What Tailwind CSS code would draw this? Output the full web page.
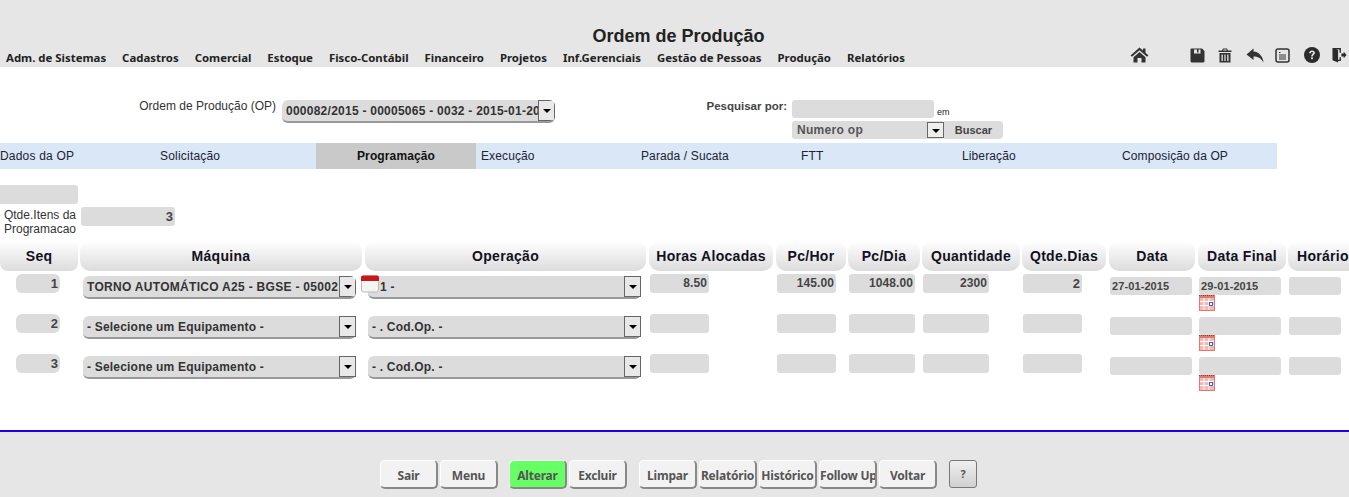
<!DOCTYPE html>
<html lang="pt-BR">
<head>
    <meta charset="UTF-8">
    <title>Ordem de Produção</title>
    <script src="https://cdn.jsdelivr.net/npm/@tailwindcss/browser@4"></script>
</head>
<body class="bg-white h-[497px] overflow-hidden font-['Liberation_Sans',Arial,sans-serif] text-[#333]">
    <!-- Cabecalho -->
    <header class="h-[67px] bg-[#e6e6e6] relative">
        <h1 class="pt-[26px] text-center text-[18px] leading-[21px] font-bold text-[#222] pl-[8px]">Ordem de Produção</h1>
        <div class="flex justify-between pl-[6px] mt-[2px]">
            <nav class="flex gap-[16px] pt-[1px] text-[11.4px] leading-[15px] font-bold text-[#222] font-['Noto_Sans',sans-serif]">
                <span>Adm. de Sistemas</span><span>Cadastros</span><span>Comercial</span><span>Estoque</span><span>Fisco-Contábil</span><span>Financeiro</span><span>Projetos</span><span>Inf.Gerenciais</span><span>Gestão de Pessoas</span><span>Produção</span><span>Relatórios</span>
            </nav>
            <div class="flex items-center h-[18px] -mt-[3px] mr-[2px] text-[#333]">
                <svg class="w-[19px] h-[16px] mr-[41px]" viewBox="0 0 19 16" fill="#333"><path d="M9.5 0.5 0.5 8.5 2 9.8 9.5 3.2 17 9.8 18.5 8.5 15.5 5.8V1.5h-2.5v2.1z"/><path d="M3.5 10.2 9.5 5 15.5 10.2V15.5H11.5V11H7.5V15.5H3.5z"/></svg>
                <svg class="w-[15px] h-[15px] mr-[13px]" viewBox="0 0 15 15" fill="#333"><path d="M1.5 0.5H12L14.5 3V13a1.5 1.5 0 0 1-1.5 1.5H2A1.5 1.5 0 0 1 .5 13V1.5a1 1 0 0 1 1-1zM4 1.5V5.5H10.5V1.5H8.5V4.5H7V1.5z" fill-rule="evenodd"/></svg>
                <svg class="w-[14px] h-[15px] mr-[14px]" viewBox="0 0 14 15" fill="#333"><path d="M5 0.5H9L10 2.5H13.5V4H.5V2.5H4zM5.6 1.6 5.2 2.5H8.8L8.4 1.6z" fill-rule="evenodd"/><path d="M1.5 5H12.5V14.5H1.5zM3.5 6.5V13H4.8V6.5zM6.4 6.5V13H7.6V6.5zM9.2 6.5V13H10.5V6.5z" fill-rule="evenodd"/></svg>
                <svg class="w-[18px] h-[15px] mr-[11px]" viewBox="0 0 18 15" fill="#333"><path d="M7.5 0.5 0.5 6.5 7.5 12V8.500C11.500 8.500 15 10 17.500 14.500 17 8.500 13 4 7.500 3.500z"/></svg>
                <svg class="w-[15px] h-[15px] mr-[14px]" viewBox="0 0 15 15" fill="none" stroke="#333"><rect x="1" y="1" width="13" height="13" rx="2" stroke-width="1.500"/><path d="M4 4.500H5.500M4 7H11M4 9H11M4 11H11" stroke-width="1"/></svg>
                <svg class="w-[16px] h-[16px] mr-[12px]" viewBox="0 0 16 16"><circle cx="8" cy="8" r="8" fill="#2b2b2b"/><path d="M5.200 6.200C5.200 4.500 6.500 3.500 8 3.500 9.700 3.500 10.900 4.500 10.900 5.900 10.900 7.800 8.800 7.800 8.800 9.500H7.100C7.100 7.200 9 7.200 9 6 9 5.500 8.600 5.100 8 5.100 7.400 5.100 7 5.600 7 6.200z" fill="#e6e6e6"/><rect x="7.100" y="10.300" width="1.800" height="1.900" fill="#e6e6e6"/></svg>
                <svg class="w-[15px] h-[16px]" viewBox="0 0 16 16" fill="#2b2b2b"><path d="M0.500 0.500H9.500V5.500H8V2H4.500L6.500 3V13H8V10.500H9.500V14.500H6.500V16L0.500 13.500z"/><path d="M10 6.500H12.500V4.500L15.500 8 12.500 11.500V9.500H10z"/></svg>
            </div>
        </div>
    </header>

    <!-- Filtros -->
    <section class="h-[76px] flex">
        <div class="w-[278px] pt-[33px] pr-[2px] text-right text-[12px] leading-[13px]">Ordem de Produção (OP)</div>
        <div class="ml-[4px] mt-[33px] w-[273px] h-[23px] bg-[#dcdcdc] rounded-[6px] border-b-2 border-[#999] flex items-center justify-between overflow-hidden">
            <span class="pl-[4px] text-[12px] tracking-[0.25px] font-bold whitespace-nowrap overflow-hidden">000082/2015 - 00005065 - 0032 - 2015-01-20</span>
            <span class="shrink-0 w-[17px] h-[21px] bg-[#e8e8e8] border border-[#666] flex items-center justify-center"><span class="border-x-[4px] border-t-[4px] border-x-transparent border-t-black"></span></span>
        </div>
        <div class="w-[232px] pt-[33px] text-right text-[11.5px] leading-[13px] font-bold text-[#444]">Pesquisar por:</div>
        <div class="ml-[5px] mt-[33px] w-[215px]">
            <div class="flex items-end">
                <div class="w-[142px] h-[18px] bg-[#dcdcdc] rounded-[3px]"></div>
                <span class="ml-[3px] text-[9px] leading-[11px] text-[#222]">em</span>
            </div>
            <div class="flex mt-[3px] h-[18px]">
                <div class="w-[152px] bg-[#dcdcdc] rounded-[3px] flex items-center justify-between">
                    <span class="pl-[5px] text-[12px] tracking-[0.3px] font-bold text-[#555]">Numero op</span>
                    <span class="w-[17px] h-[16px] bg-[#eee] border border-[#666] flex items-center justify-center"><span class="border-x-[4px] border-t-[4px] border-x-transparent border-t-black mt-[2px]"></span></span>
                </div>
                <div class="w-[59px] bg-[#dcdcdc] rounded-r-[4px] text-center text-[11px] leading-[18px] font-bold text-[#444]">Buscar</div>
            </div>
        </div>
    </section>

    <!-- Abas -->
    <nav class="w-[1277px] h-[26px] bg-[#d9e7f7] text-[12px] tracking-[0.12px] leading-[26px] text-[#223] grid grid-cols-[160px_156px_160px_160px_160px_161px_160px_160px]">
        <span class="tracking-[0.2px]">Dados da OP</span>
        <span class="tracking-[0.2px]">Solicitação</span>
        <span class="bg-[#c9c9c9] text-center font-bold text-[#111]">Programação</span>
        <span class="pl-[5px]">Execução</span>
        <span class="pl-[5px]">Parada / Sucata</span>
        <span class="pl-[5px]">FTT</span>
        <span class="pl-[5px]">Liberação</span>
        <span class="pl-[5px]">Composição da OP</span>
    </nav>

    <!-- Programacao -->
    <section class="h-[72px] pt-[16px]">
        <div class="w-[78px] h-[19px] bg-[#dcdcdc] rounded-r-[3px]"></div>
        <div class="flex mt-[3px]">
            <div class="w-[78px] pt-[1px] pr-[2px] text-right text-[12px] leading-[14px] text-[#333]">Qtde.Itens da<br>Programacao</div>
            <div class="ml-[3px] w-[94px] h-[19px] bg-[#dcdcdc] rounded-[3px] text-right pr-[2px] text-[13px] leading-[20px] font-bold text-[#444]">3</div>
        </div>
    </section>

    <!-- Itens -->
    <section class="grid grid-cols-[80px_285px_284px_127px_72px_74px_100px_87px_89px_90px_61px] auto-rows-[40px] grid-rows-[33px] text-[#444] w-[1349px] overflow-hidden">
        <div class="h-[30px] mr-[2px] rounded-b-[8px] bg-gradient-to-b from-white to-[#dcdcdc] text-center text-[14px] tracking-[0.2px] leading-[30px] font-bold text-[#112]">Seq</div>
        <div class="h-[30px] mr-[3px] rounded-[10px] bg-gradient-to-b from-white to-[#dcdcdc] text-center text-[14px] tracking-[0.3px] leading-[30px] font-bold text-[#112]">Máquina</div>
        <div class="h-[30px] mr-[3px] rounded-[10px] bg-gradient-to-b from-white to-[#dcdcdc] text-center text-[14px] tracking-[0.3px] leading-[30px] font-bold text-[#112]">Operação</div>
        <div class="h-[30px] mr-[3px] rounded-[10px] bg-gradient-to-b from-white to-[#dcdcdc] text-center text-[14px] tracking-[0.3px] leading-[30px] font-bold text-[#112]">Horas Alocadas</div>
        <div class="h-[30px] mr-[2px] rounded-[10px] bg-gradient-to-b from-white to-[#dcdcdc] text-center text-[14px] tracking-[0.3px] leading-[30px] font-bold text-[#112]">Pc/Hor</div>
        <div class="h-[30px] mr-[2px] rounded-[10px] bg-gradient-to-b from-white to-[#dcdcdc] text-center text-[14px] tracking-[0.3px] leading-[30px] font-bold text-[#112]">Pc/Dia</div>
        <div class="h-[30px] mr-[2px] rounded-[10px] bg-gradient-to-b from-white to-[#dcdcdc] text-center text-[14px] tracking-[0.3px] leading-[30px] font-bold text-[#112]">Quantidade</div>
        <div class="h-[30px] mr-[3px] rounded-[10px] bg-gradient-to-b from-white to-[#dcdcdc] text-center text-[14px] tracking-[0.3px] leading-[30px] font-bold text-[#112]">Qtde.Dias</div>
        <div class="h-[30px] mr-[3px] rounded-[10px] bg-gradient-to-b from-white to-[#dcdcdc] text-center text-[14px] tracking-[0.3px] leading-[30px] font-bold text-[#112]">Data</div>
        <div class="h-[30px] mr-[2px] rounded-[10px] bg-gradient-to-b from-white to-[#dcdcdc] text-center text-[14px] tracking-[0.3px] leading-[30px] font-bold text-[#112]">Data Final</div>
        <div class="h-[30px] rounded-l-[10px] bg-gradient-to-b from-white to-[#dcdcdc] text-[14px] tracking-[0.3px] leading-[30px] font-bold text-[#112] pl-[9px] whitespace-nowrap">Horário</div>

        <!-- linha 1 -->
        <div class="ml-[16px] w-[44px] h-[19px] bg-[#dcdcdc] rounded-[6px] text-right pr-[2px] text-[13px] leading-[19px] font-bold">1</div>
        <div class="ml-[3px] mt-[2px] w-[273px] h-[23px] bg-[#dcdcdc] rounded-[6px] border-b-2 border-[#999] flex items-center justify-between overflow-hidden">
            <span class="pl-[4px] text-[12px] tracking-[0.3px] font-bold text-[#333] whitespace-nowrap overflow-hidden">TORNO AUTOMÁTICO A25 - BGSE - 05002</span>
            <span class="shrink-0 w-[17px] h-[21px] bg-[#e8e8e8] border border-[#666] flex items-center justify-center"><span class="border-x-[4px] border-t-[4px] border-x-transparent border-t-black"></span></span>
        </div>
        <div class="relative ml-[3px] mt-[2px] w-[273px] h-[23px] bg-[#dcdcdc] rounded-[6px] border-b-2 border-[#999] flex items-center justify-between">
            <span class="pl-[12px] text-[12px] tracking-[0.3px] font-bold text-[#333]">1 -</span>
            <span class="shrink-0 w-[17px] h-[21px] bg-[#e8e8e8] border border-[#666] flex items-center justify-center"><span class="border-x-[4px] border-t-[4px] border-x-transparent border-t-black"></span></span>
            <svg class="absolute left-[-7px] top-[-1px] w-[18px] h-[18px]" viewBox="0 0 18 18"><rect x="0.500" y="1" width="17" height="16" rx="2" fill="#f4f4f4" stroke="#bbb"/><path d="M0 6V2.500A2 2 0 0 1 2 .5H16A2 2 0 0 1 18 2.500V6z" fill="#c8171c"/></svg>
        </div>
        <div class="ml-[1px] w-[59px] h-[19px] bg-[#dcdcdc] rounded-[3px] text-right pr-[2px] text-[12px] tracking-[0.1px] leading-[19px] font-bold">8.50</div>
        <div class="ml-[1px] w-[59px] h-[19px] bg-[#dcdcdc] rounded-[3px] text-right pr-[2px] text-[12px] tracking-[0.1px] leading-[19px] font-bold">145.00</div>
        <div class="ml-[1px] w-[66px] h-[19px] bg-[#dcdcdc] rounded-[3px] text-right pr-[2px] text-[12px] tracking-[0.1px] leading-[19px] font-bold">1048.00</div>
        <div class="ml-[1px] w-[66px] h-[19px] bg-[#dcdcdc] rounded-[3px] text-right pr-[2px] text-[12px] tracking-[0.1px] leading-[19px] font-bold">2300</div>
        <div class="ml-[1px] w-[59px] h-[19px] bg-[#dcdcdc] rounded-[3px] text-right pr-[2px] text-[13px] leading-[19px] font-bold">2</div>
        <div class="ml-[1px] mt-[3px] w-[82px] h-[18px] bg-[#dcdcdc] rounded-[3px] pl-[2px] text-[11px] tracking-[0.1px] leading-[18px] font-bold">27-01-2015</div>
        <div class="ml-[1px] mt-[3px]">
            <div class="w-[82px] h-[18px] bg-[#dcdcdc] rounded-[3px] pl-[2px] text-[11px] tracking-[0.1px] leading-[18px] font-bold">29-01-2015</div>
            <svg class="block w-[16px] h-[16px]" viewBox="0 0 16 16"><rect width="16" height="16" fill="#dd7b70"/><path d="M0 .5H16" stroke="#933" stroke-dasharray="1 1"/><path d="M1 3H15V15H1z" fill="#f5b8b0"/><path d="M1 6.500H15M1 10.500H15M5 3V15M10 3V15" stroke="#fff"/><rect x="10.500" y="7.500" width="3" height="3" fill="#fff" stroke="#3366dd"/></svg>
        </div>
        <div class="ml-[1px] mt-[3px] w-[52px] h-[18px] bg-[#dcdcdc] rounded-[3px]"></div>

        <!-- linha 2 -->
        <div class="ml-[16px] w-[44px] h-[19px] bg-[#dcdcdc] rounded-[6px] text-right pr-[2px] text-[13px] leading-[19px] font-bold">2</div>
        <div class="ml-[3px] mt-[2px] w-[273px] h-[23px] bg-[#dcdcdc] rounded-[6px] border-b-2 border-[#999] flex items-center justify-between">
            <span class="pl-[4px] text-[12px] tracking-[0.2px] font-bold text-[#333]">- Selecione um Equipamento -</span>
            <span class="shrink-0 w-[17px] h-[21px] bg-[#e8e8e8] border border-[#666] flex items-center justify-center"><span class="border-x-[4px] border-t-[4px] border-x-transparent border-t-black"></span></span>
        </div>
        <div class="ml-[3px] mt-[2px] w-[273px] h-[23px] bg-[#dcdcdc] rounded-[6px] border-b-2 border-[#999] flex items-center justify-between">
            <span class="pl-[4px] text-[12px] tracking-[0.2px] font-bold text-[#333]">- . Cod.Op. -</span>
            <span class="shrink-0 w-[17px] h-[21px] bg-[#e8e8e8] border border-[#666] flex items-center justify-center"><span class="border-x-[4px] border-t-[4px] border-x-transparent border-t-black"></span></span>
        </div>
        <div class="ml-[1px] w-[59px] h-[19px] bg-[#dcdcdc] rounded-[3px]"></div>
        <div class="ml-[1px] w-[59px] h-[19px] bg-[#dcdcdc] rounded-[3px]"></div>
        <div class="ml-[1px] w-[66px] h-[19px] bg-[#dcdcdc] rounded-[3px]"></div>
        <div class="ml-[1px] w-[66px] h-[19px] bg-[#dcdcdc] rounded-[3px]"></div>
        <div class="ml-[1px] w-[59px] h-[19px] bg-[#dcdcdc] rounded-[3px]"></div>
        <div class="ml-[1px] mt-[3px] w-[82px] h-[18px] bg-[#dcdcdc] rounded-[3px]"></div>
        <div class="ml-[1px] mt-[3px]">
            <div class="w-[82px] h-[18px] bg-[#dcdcdc] rounded-[3px]"></div>
            <svg class="block w-[16px] h-[16px]" viewBox="0 0 16 16"><rect width="16" height="16" fill="#dd7b70"/><path d="M0 .5H16" stroke="#933" stroke-dasharray="1 1"/><path d="M1 3H15V15H1z" fill="#f5b8b0"/><path d="M1 6.500H15M1 10.500H15M5 3V15M10 3V15" stroke="#fff"/><rect x="10.500" y="7.500" width="3" height="3" fill="#fff" stroke="#3366dd"/></svg>
        </div>
        <div class="ml-[1px] mt-[3px] w-[52px] h-[18px] bg-[#dcdcdc] rounded-[3px]"></div>

        <!-- linha 3 -->
        <div class="ml-[16px] w-[44px] h-[19px] bg-[#dcdcdc] rounded-[6px] text-right pr-[2px] text-[13px] leading-[19px] font-bold">3</div>
        <div class="ml-[3px] mt-[2px] w-[273px] h-[23px] bg-[#dcdcdc] rounded-[6px] border-b-2 border-[#999] flex items-center justify-between">
            <span class="pl-[4px] text-[12px] tracking-[0.2px] font-bold text-[#333]">- Selecione um Equipamento -</span>
            <span class="shrink-0 w-[17px] h-[21px] bg-[#e8e8e8] border border-[#666] flex items-center justify-center"><span class="border-x-[4px] border-t-[4px] border-x-transparent border-t-black"></span></span>
        </div>
        <div class="ml-[3px] mt-[2px] w-[273px] h-[23px] bg-[#dcdcdc] rounded-[6px] border-b-2 border-[#999] flex items-center justify-between">
            <span class="pl-[4px] text-[12px] tracking-[0.2px] font-bold text-[#333]">- . Cod.Op. -</span>
            <span class="shrink-0 w-[17px] h-[21px] bg-[#e8e8e8] border border-[#666] flex items-center justify-center"><span class="border-x-[4px] border-t-[4px] border-x-transparent border-t-black"></span></span>
        </div>
        <div class="ml-[1px] w-[59px] h-[19px] bg-[#dcdcdc] rounded-[3px]"></div>
        <div class="ml-[1px] w-[59px] h-[19px] bg-[#dcdcdc] rounded-[3px]"></div>
        <div class="ml-[1px] w-[66px] h-[19px] bg-[#dcdcdc] rounded-[3px]"></div>
        <div class="ml-[1px] w-[66px] h-[19px] bg-[#dcdcdc] rounded-[3px]"></div>
        <div class="ml-[1px] w-[59px] h-[19px] bg-[#dcdcdc] rounded-[3px]"></div>
        <div class="ml-[1px] mt-[3px] w-[82px] h-[18px] bg-[#dcdcdc] rounded-[3px]"></div>
        <div class="ml-[1px] mt-[3px]">
            <div class="w-[82px] h-[18px] bg-[#dcdcdc] rounded-[3px]"></div>
            <svg class="block w-[16px] h-[16px]" viewBox="0 0 16 16"><rect width="16" height="16" fill="#dd7b70"/><path d="M0 .5H16" stroke="#933" stroke-dasharray="1 1"/><path d="M1 3H15V15H1z" fill="#f5b8b0"/><path d="M1 6.500H15M1 10.500H15M5 3V15M10 3V15" stroke="#fff"/><rect x="10.500" y="7.500" width="3" height="3" fill="#fff" stroke="#3366dd"/></svg>
        </div>
        <div class="ml-[1px] mt-[3px] w-[52px] h-[18px] bg-[#dcdcdc] rounded-[3px]"></div>
    </section>

    <!-- Rodape -->
    <footer class="absolute top-[430px] inset-x-0 h-[67px] bg-[#e6e6e6] border-t-2 border-[#2200ee] pt-[28px] pl-[380px] flex gap-[2px] items-start text-[12px] tracking-[-0.2px] font-bold text-[#555] font-['Noto_Sans',sans-serif]">
        <button class="w-[58px] h-[29px] bg-[#f2f2f2] rounded-[5px] border-t border-l border-white border-r-2 border-b-2 border-r-[#888] border-b-[#888] leading-[29px]">Sair</button>
        <button class="w-[58px] h-[29px] bg-[#f2f2f2] rounded-[5px] border-t border-l border-white border-r-2 border-b-2 border-r-[#888] border-b-[#888] leading-[29px]">Menu</button>
        <button class="ml-[9px] w-[58px] h-[29px] bg-[#66ff66] rounded-[5px] border-t border-l border-white border-r-2 border-b-2 border-r-[#888] border-b-[#888] leading-[29px]">Alterar</button>
        <button class="w-[58px] h-[29px] bg-[#f2f2f2] rounded-[5px] border-t border-l border-white border-r-2 border-b-2 border-r-[#888] border-b-[#888] leading-[29px]">Excluir</button>
        <button class="ml-[10px] w-[58px] h-[29px] bg-[#f2f2f2] rounded-[5px] border-t border-l border-white border-r-2 border-b-2 border-r-[#888] border-b-[#888] leading-[29px]">Limpar</button>
        <button class="w-[58px] h-[29px] bg-[#f2f2f2] rounded-[5px] border-t border-l border-white border-r-2 border-b-2 border-r-[#888] border-b-[#888] leading-[29px] whitespace-nowrap">Relatório</button>
        <button class="w-[58px] h-[29px] bg-[#f2f2f2] rounded-[5px] border-t border-l border-white border-r-2 border-b-2 border-r-[#888] border-b-[#888] leading-[29px] whitespace-nowrap">Histórico</button>
        <button class="w-[58px] h-[29px] bg-[#f2f2f2] rounded-[5px] border-t border-l border-white border-r-2 border-b-2 border-r-[#888] border-b-[#888] leading-[29px] whitespace-nowrap overflow-hidden">Follow Up</button>
        <button class="w-[58px] h-[29px] bg-[#f2f2f2] rounded-[5px] border-t border-l border-white border-r-2 border-b-2 border-r-[#888] border-b-[#888] leading-[29px]">Voltar</button>
        <button class="ml-[10px] w-[28px] h-[28px] bg-gradient-to-b from-[#f0f0f0] to-[#d0d0d0] rounded-[3px] border border-[#777] text-[11px] leading-[26px]">?</button>
    </footer>
</body>
</html>
